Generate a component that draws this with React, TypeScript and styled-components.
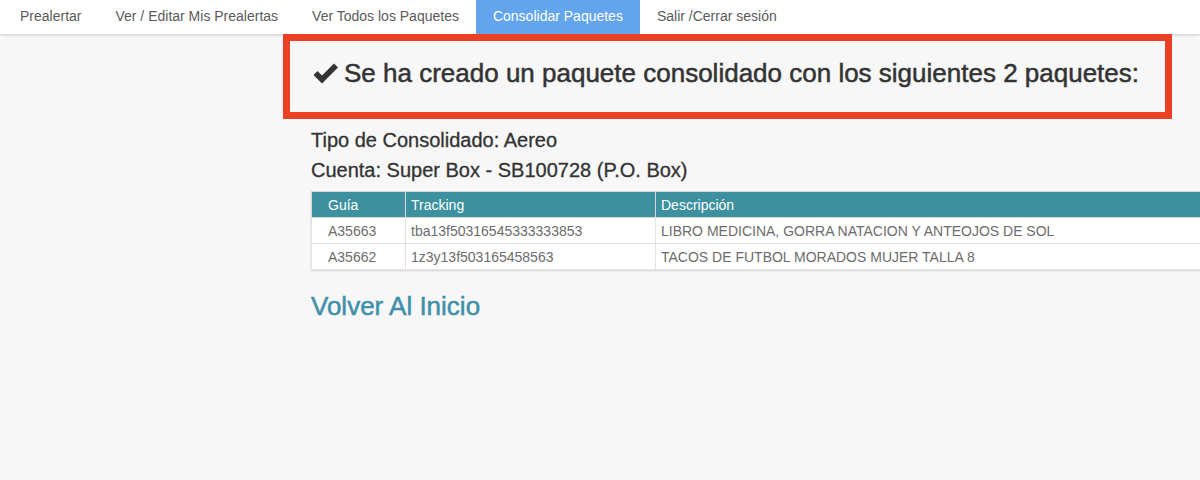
import React from "react";
import styled, { createGlobalStyle } from "styled-components";

const Global = createGlobalStyle`
  html, body { margin: 0; padding: 0; background: #f7f7f7; overflow: hidden; }
  body { font-family: "Liberation Sans", Arial, Helvetica, sans-serif; width: 1200px; height: 480px; }
`;

const Page = styled.div`
  width: 1200px;
  height: 480px;
  background: #f7f7f7;
  display: flex;
  flex-direction: column;
  overflow: hidden;
`;

const Nav = styled.nav`
  height: 34px;
  flex: none;
  background: #fff;
  box-shadow: 0 1px 3px rgba(0, 0, 0, 0.18);
  display: flex;
  padding-left: 3px;
  position: relative;
  z-index: 1;
`;

const NavItem = styled.a<{ $active?: boolean }>`
  display: flex;
  align-items: center;
  padding: 0 17px 2px;
  font-size: 14px;
  color: ${(p) => (p.$active ? "#fff" : "#5a5a5a")};
  background: ${(p) => (p.$active ? "#62a5ec" : "transparent")};
  text-decoration: none;
  white-space: nowrap;
`;

const Main = styled.main`
  display: flex;
  flex-direction: column;
  padding-left: 283px;
  position: relative;
  z-index: 2;
`;

const Notice = styled.div`
  width: 852px;
  height: 65px;
  border: 7px solid #ea4026;
  display: flex;
  align-items: center;
  gap: 6px;
  padding-left: 23px;
  padding-bottom: 6px;
  box-sizing: content-box;
  font-size: 26px;
  font-weight: normal;
  color: #333;
  -webkit-text-stroke: 0.5px #333;
  white-space: nowrap;
`;

const CheckIcon = styled.svg`
  flex: none;
`;

const Content = styled.div`
  display: flex;
  flex-direction: column;
  padding-left: 28px;
  padding-top: 6px;
`;

const Info = styled.div`
  font-size: 20px;
  color: #333;
  -webkit-text-stroke: 0.3px #333;
  line-height: 30px;
`;

const Table = styled.table`
  margin-top: 6px;
  width: 1000px;
  border-collapse: collapse;
  background: #fff;
  box-shadow: 0 1px 2px rgba(0, 0, 0, 0.15);
  font-size: 14px;
`;

const Th = styled.th<{ $w?: number; $indent?: boolean }>`
  background: #3d909e;
  color: #fff;
  font-weight: normal;
  text-align: left;
  height: 26px;
  padding: 0 0 0 ${(p) => (p.$indent ? 16 : 5)}px;
  width: ${(p) => (p.$w ? `${p.$w}px` : "auto")};
  border: 1px solid #d8d8d8;
  box-sizing: border-box;
`;

const Td = styled.td<{ $indent?: boolean }>`
  color: #6c6c6c;
  height: 26px;
  padding: 0 0 0 ${(p) => (p.$indent ? 16 : 5)}px;
  border: 1px solid #e2e2e2;
  box-sizing: border-box;
  white-space: nowrap;
`;

const BackLink = styled.a`
  margin-top: 21px;
  font-size: 26px;
  line-height: 30px;
  color: #3e8fa9;
  -webkit-text-stroke: 0.5px #3e8fa9;
  text-decoration: none;
`;

const Check = () => (
  <CheckIcon width="25" height="21" viewBox="0 0 25 21" aria-hidden>
    <path
      d="M2.5 10 L9 16.5 L23 2.5"
      fill="none"
      stroke="#333"
      strokeWidth="5.6"
      strokeLinecap="butt"
      strokeLinejoin="miter"
    />
  </CheckIcon>
);

const rows = [
  ["A35663", "tba13f50316545333333853", "LIBRO MEDICINA, GORRA NATACION Y ANTEOJOS DE SOL"],
  ["A35662", "1z3y13f503165458563", "TACOS DE FUTBOL MORADOS MUJER TALLA 8"],
];

export default function App() {
  return (
    <Page>
      <Global />
      <Nav>
        <NavItem>Prealertar</NavItem>
        <NavItem>Ver / Editar Mis Prealertas</NavItem>
        <NavItem>Ver Todos los Paquetes</NavItem>
        <NavItem $active>Consolidar Paquetes</NavItem>
        <NavItem>Salir /Cerrar sesión</NavItem>
      </Nav>
      <Main>
        <Notice>
          <Check />
          <span>Se ha creado un paquete consolidado con los siguientes 2 paquetes:</span>
        </Notice>
        <Content>
          <Info>Tipo de Consolidado: Aereo</Info>
          <Info>Cuenta: Super Box - SB100728 (P.O. Box)</Info>
          <Table>
            <thead>
              <tr>
                <Th $w={94} $indent>Guía</Th>
                <Th $w={250}>Tracking</Th>
                <Th>Descripción</Th>
              </tr>
            </thead>
            <tbody>
              {rows.map((r) => (
                <tr key={r[0]}>
                  <Td $indent>{r[0]}</Td>
                  <Td>{r[1]}</Td>
                  <Td>{r[2]}</Td>
                </tr>
              ))}
            </tbody>
          </Table>
          <BackLink>Volver Al Inicio</BackLink>
        </Content>
      </Main>
    </Page>
  );
}
